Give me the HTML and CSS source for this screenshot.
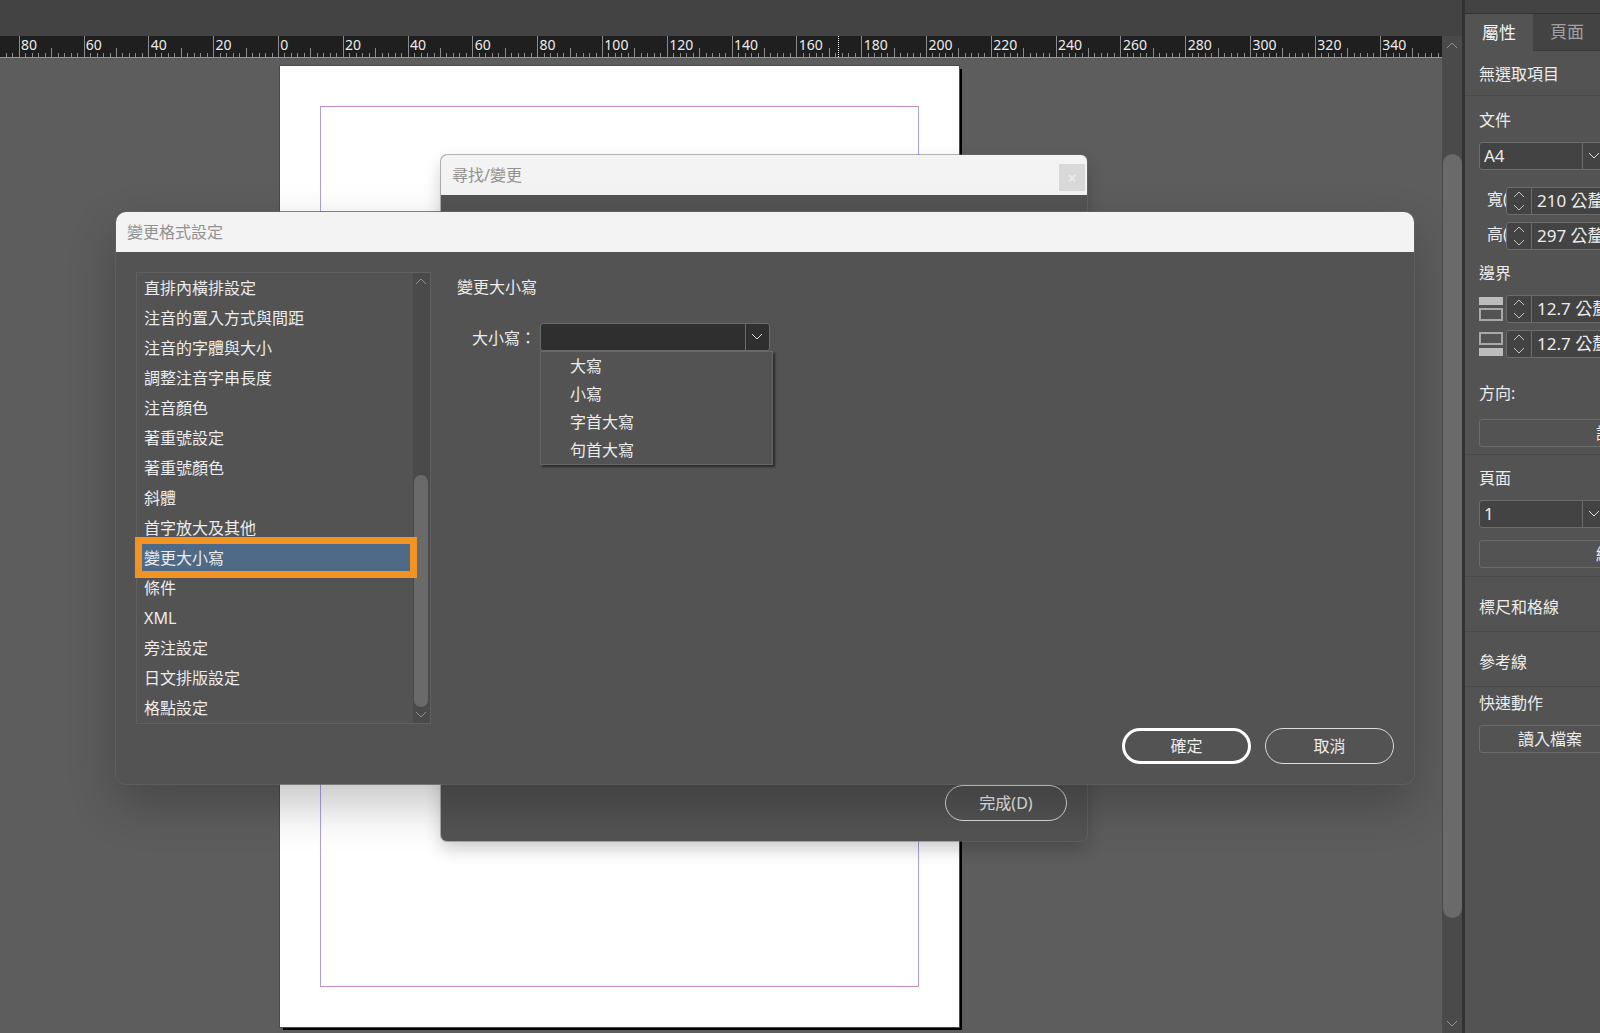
FILE: index.html
```
<!DOCTYPE html>
<html lang="zh-Hant">
  <head>
    <meta charset="utf-8">
    <title>變更格式設定</title>
    <link rel="stylesheet" href="styles.css">
  </head>
  <body>
    <main class="workspace">
      <div class="topbar"></div>
      <div class="work-row">
        <div class="work-main">
          <div class="ruler">
            <svg class="ruler-ticks" width="1442" height="21">
              <path id="ticks" />
              <path class="cursor-mark" d="M838.5 0V21" />
            </svg>
            <div class="ruler-labels" id="rulerLabels"></div>
          </div>
          <div class="canvas">
            <div class="page"><div class="page-margin"></div></div>

            <section class="window find-window">
              <header class="window-title find-title">
                <span>尋找/變更</span>
                <button class="close" aria-label="關閉">×</button>
              </header>
              <div class="find-body">
                <button class="pill done">完成(D)</button>
              </div>
            </section>

            <section class="window format-window">
              <header class="window-title">變更格式設定</header>
              <div class="format-body">
                <div class="category-box">
                  <ul class="categories">
                    <li><button>直排內橫排設定</button></li>
                    <li><button>注音的置入方式與間距</button></li>
                    <li><button>注音的字體與大小</button></li>
                    <li><button>調整注音字串長度</button></li>
                    <li><button>注音顏色</button></li>
                    <li><button>著重號設定</button></li>
                    <li><button>著重號顏色</button></li>
                    <li><button>斜體</button></li>
                    <li><button>首字放大及其他</button></li>
                    <li class="selected"><button>變更大小寫</button></li>
                    <li><button>條件</button></li>
                    <li><button>XML</button></li>
                    <li><button>旁注設定</button></li>
                    <li><button>日文排版設定</button></li>
                    <li><button>格點設定</button></li>
                  </ul>
                  <div class="scrollbar list-scroll">
                    <button class="scroll-arrow" aria-label="向上"><svg width="12" height="8"><path d="M1 7l5-5 5 5" /></svg></button>
                    <div class="gap-before"></div>
                    <div class="thumb"></div>
                    <button class="scroll-arrow" aria-label="向下"><svg width="12" height="8"><path d="M1 1l5 5 5-5" /></svg></button>
                  </div>
                </div>

                <div class="settings">
                  <h2>變更大小寫</h2>
                  <div class="case-row">
                    <label for="case">大小寫：</label>
                    <div class="case-field">
                      <select id="case" class="combo case-select"><option></option></select>
                      <div class="menu">
                        <button>大寫</button>
                        <button>小寫</button>
                        <button>字首大寫</button>
                        <button>句首大寫</button>
                      </div>
                    </div>
                  </div>
                  <div class="actions">
                    <button class="pill primary">確定</button>
                    <button class="pill">取消</button>
                  </div>
                </div>
              </div>
            </section>
          </div>
        </div>
        <div class="scrollbar canvas-scroll">
          <button class="scroll-arrow" aria-label="向上"><svg width="12" height="8"><path d="M1 7l5-5 5 5" /></svg></button>
          <div class="gap-before"></div>
          <div class="thumb"></div>
          <div class="gap-after"></div>
          <button class="scroll-arrow" aria-label="向下"><svg width="12" height="8"><path d="M1 1l5 5 5-5" /></svg></button>
        </div>
      </div>
    </main>

    <aside class="panel">
      <div class="tabs">
        <button class="tab active">屬性</button>
        <button class="tab">頁面</button>
      </div>
      <div class="panel-body">
        <section class="group status">無選取項目</section>

        <section class="group document">
          <h3><label for="preset">文件</label></h3>
          <select id="preset" class="combo"><option>A4</option></select>
          <div class="fields size-fields">
            <div class="field">
              <label for="width">寬(W):</label>
              <div class="stepper">
                <button aria-label="調整寬度"><svg width="14" height="20"><path d="M2 6l5-5 5 5M2 14l5 5 5-5" /></svg></button>
                <input id="width" value="210 公釐">
              </div>
            </div>
            <div class="field">
              <label for="height">高(H):</label>
              <div class="stepper">
                <button aria-label="調整高度"><svg width="14" height="20"><path d="M2 6l5-5 5 5M2 14l5 5 5-5" /></svg></button>
                <input id="height" value="297 公釐">
              </div>
            </div>
          </div>
          <h3 class="margin-heading">邊界</h3>
          <div class="fields">
            <div class="field icon-field">
              <label for="marginTop" aria-label="上邊界">
                <svg class="margin-icon" width="24" height="24"><path class="fill" d="M1 1h22v6H1z" /><path d="M1 12h22v11H1z" /></svg>
              </label>
              <div class="stepper">
                <button aria-label="調整上邊界"><svg width="14" height="20"><path d="M2 6l5-5 5 5M2 14l5 5 5-5" /></svg></button>
                <input id="marginTop" value="12.7 公釐">
              </div>
            </div>
            <div class="field icon-field">
              <label for="marginBottom" aria-label="下邊界">
                <svg class="margin-icon" width="24" height="24"><path d="M1 1h22v11H1z" /><path class="fill" d="M1 17h22v6H1z" /></svg>
              </label>
              <div class="stepper">
                <button aria-label="調整下邊界"><svg width="14" height="20"><path d="M2 6l5-5 5 5M2 14l5 5 5-5" /></svg></button>
                <input id="marginBottom" value="12.7 公釐">
              </div>
            </div>
          </div>
          <h3 class="direction-heading">方向:</h3>
          <button class="wide-button">調整版面</button>
        </section>

        <section class="group pages">
          <h3><label for="pageNumber">頁面</label></h3>
          <select id="pageNumber" class="combo"><option>1</option></select>
          <button class="wide-button">編輯頁面</button>
        </section>

        <section class="group single">標尺和格線</section>
        <section class="group single">參考線</section>

        <section class="group quick">
          <h3>快速動作</h3>
          <button class="wide-button half">讀入檔案</button>
        </section>
      </div>
    </aside>

    <script>
      // ruler: 20 units per label, a short tick every 2 units
      const ORIGIN = 278;
      const STEP = 64.8;
      const labels = document.getElementById("rulerLabels");
      let path = "";

      for (let i = -50; i < 180; i++) {
        const x = Math.round(ORIGIN + (i * STEP) / 10) + 0.5;
        let top = 17;
        if (i % 10 === 0) top = 0;
        else if (i % 5 === 0) top = 12;
        path += `M${x} ${top}V21`;
      }
      document.getElementById("ticks").setAttribute("d", path);

      for (let i = -4; i < 18; i++) {
        const label = document.createElement("span");
        label.textContent = Math.abs(i * 20);
        labels.appendChild(label);
      }
    </script>
  </body>
</html>
```

FILE: styles.css
```
* {
  box-sizing: border-box;
}
body {
  display: flex;
  height: 100vh;
  margin: 0;
  overflow: hidden;
  background: #535353;
  color: #ececec;
  font-family: "Noto Sans", "Noto Sans CJK TC", sans-serif;
  font-size: 16px;
  line-height: 24px;
}
button,
input,
select {
  margin: 0;
  padding: 0;
  border: none;
  background: none;
  color: inherit;
  font: inherit;
}
h2,
h3 {
  margin: 0;
  font-size: 16px;
  font-weight: normal;
}
svg {
  display: block;
  fill: none;
  stroke: #c4c4c4;
}

/* workspace */
.workspace {
  display: flex;
  flex: 1;
  flex-direction: column;
  min-width: 0;
}
.topbar {
  height: 36px;
  background: #434343;
}
.work-row {
  display: flex;
  flex: 1;
  min-height: 0;
}
.work-main {
  display: flex;
  flex: 1;
  flex-direction: column;
  min-width: 0;
}
.ruler {
  display: grid;
  height: 22px;
  overflow: hidden;
  border-bottom: 1px solid #969696;
  background: #1f1f1f;
}
.ruler-ticks,
.ruler-labels {
  grid-area: 1 / 1;
}
.ruler-ticks {
  stroke: #8c8c8c;
}
.cursor-mark {
  stroke: #fff;
  stroke-dasharray: 1 1;
}
.ruler-labels {
  display: grid;
  grid-template-columns: repeat(22, 1fr);
  width: 1426px;
  margin-left: 21px;
  font-size: 14px;
  line-height: 17px;
}
.canvas {
  position: relative;
  flex: 1;
  overflow: hidden;
  background: #5d5d5d;
}
.page {
  position: absolute;
  top: 8px;
  left: 280px;
  width: 679px;
  height: 961px;
  padding: 40px;
  outline: 1px solid #4a4a4a;
  background: #fff;
  box-shadow: 3px 3px 0 #000;
}
.page-margin {
  height: 100%;
  border: 1px solid #a9a2ea;
  border-top-color: #c98cb8;
  border-bottom-color: #c98cb8;
}

/* scrollbars */
.scrollbar {
  display: flex;
  flex-direction: column;
  background: #4a4a4a;
}
.scroll-arrow {
  display: flex;
  align-items: center;
  justify-content: center;
  height: 18px;
}
.scroll-arrow svg {
  stroke: #919191;
}
.thumb {
  border-radius: 10px;
  background: #6a6a6a;
}
.canvas-scroll {
  width: 20px;
}
.canvas-scroll .gap-before {
  flex: 100;
}
.canvas-scroll .thumb {
  flex: 764;
  margin-left: 1px;
}
.canvas-scroll .gap-after {
  flex: 97;
}

/* windows */
.window {
  position: absolute;
  display: flex;
  flex-direction: column;
  background: #535353;
}
.window-title {
  display: flex;
  align-items: center;
  height: 40px;
  padding-left: 11px;
  background: #f3f3f3;
  color: #929292;
}
.find-window {
  top: 97px;
  left: 441px;
  width: 646px;
  height: 686px;
  overflow: hidden;
  border-radius: 6px;
  box-shadow: 0 0 0 1px rgba(110, 110, 110, 0.5), 0 8px 18px rgba(0, 0, 0, 0.2);
}
.find-title {
  justify-content: space-between;
  padding-right: 2px;
}
.close {
  width: 26px;
  height: 27px;
  margin-top: 5px;
  background: #d9d9d9;
  color: #f0f0f0;
}
.find-body {
  display: flex;
  flex: 1;
  align-items: flex-end;
  justify-content: flex-end;
  padding: 20px;
}
.format-window {
  top: 154px;
  right: 28px;
  left: 116px;
  height: 572px;
  overflow: hidden;
  border-radius: 10px;
  box-shadow: 0 0 0 1px rgba(96, 96, 96, 0.8), 0 20px 48px rgba(0, 0, 0, 0.24);
}
.format-body {
  display: flex;
  flex: 1;
  gap: 26px;
  padding: 20px;
}
.category-box {
  display: flex;
  width: 295px;
  height: 452px;
  border: 1px solid #606060;
}
.categories {
  flex: 1;
  margin: 0;
  padding: 0;
  list-style: none;
}
.categories li {
  position: relative;
  height: 30px;
}
.categories button {
  width: 100%;
  height: 30px;
  padding: 0 0 0 7px;
  text-align: left;
}
.categories .selected button {
  background: #4e6a87;
}
/* highlight frame laid over the rows around the selected one */
.categories .selected::after {
  position: absolute;
  inset: -6px -4px -5px -2px;
  border: 7px solid #f29423;
  content: "";
}
.list-scroll {
  width: 17px;
  padding: 0 2px 0 1px;
}
.list-scroll .scroll-arrow {
  height: 16px;
}
.list-scroll .gap-before {
  flex: 185;
}
.list-scroll .thumb {
  flex: 231;
}
.settings {
  display: flex;
  flex: 1;
  flex-direction: column;
}
.settings h2 {
  padding-top: 3px;
}
.case-row {
  display: flex;
  gap: 4px;
  margin-top: 24px;
  padding-left: 15px;
}
.case-row label {
  width: 64px;
  line-height: 30px;
}
.case-field {
  position: relative;
  width: 230px;
}
.menu {
  position: absolute;
  top: 28px;
  left: 0;
  display: flex;
  flex-direction: column;
  width: 233px;
  border: 1px solid #686868;
  background: #535353;
  box-shadow: 2px 2px 2px #2a2a2a;
}
.menu button {
  height: 28px;
  padding-left: 29px;
  text-align: left;
}
.actions {
  display: flex;
  gap: 14px;
  justify-content: flex-end;
  margin-top: auto;
}
.pill {
  width: 129px;
  height: 36px;
  border: 1px solid #dcdcdc;
  border-radius: 18px;
}
.primary {
  border: 3px solid #fff;
}
.done {
  width: 122px;
}

/* form controls */
.combo {
  display: block;
  width: 128px;
  height: 28px;
  padding-left: 4px;
  border: 1px solid #6c6c6c;
  border-radius: 3px;
  appearance: none;
  background:
    url("data:image/svg+xml,%3Csvg xmlns='http://www.w3.org/2000/svg' width='12' height='8'%3E%3Cpath d='M1 1l5 5 5-5' fill='none' stroke='%23dddddd'/%3E%3C/svg%3E") right 6px center no-repeat,
    linear-gradient(#6c6c6c, #6c6c6c) right 23px center / 1px 100% no-repeat,
    #434343;
  font-size: 17px;
}
.case-select {
  width: 100%;
  background-color: #2f2f2f;
}
.wide-button {
  display: block;
  width: 100%;
  height: 28px;
  border: 1px solid #6c6c6c;
  border-radius: 3px;
}
.half {
  width: 142px;
}
.fields {
  display: flex;
  flex-direction: column;
  gap: 7px;
}
.field {
  display: flex;
}
.field label {
  width: 19px;
  margin-left: 8px;
  overflow: hidden;
  white-space: nowrap;
}
.icon-field label {
  width: 24px;
  margin: 2px 3px 0 0;
}
.margin-icon {
  stroke: #a8a8a8;
  stroke-width: 2;
}
.margin-icon .fill {
  fill: #bcbcbc;
  stroke: #bcbcbc;
}
.stepper {
  display: flex;
  width: 130px;
  height: 28px;
  border: 1px solid #6c6c6c;
  border-radius: 3px;
  background: #434343;
}
.stepper button {
  display: flex;
  align-items: center;
  justify-content: center;
  width: 25px;
  border-right: 1px solid #6c6c6c;
}
.stepper input {
  flex: 1;
  min-width: 0;
  padding-left: 5px;
  font-size: 17px;
}

/* properties panel */
.panel {
  display: flex;
  flex-direction: column;
  width: 138px;
  overflow: hidden;
  border-left: 3px solid #323232;
}
.tabs {
  display: flex;
  height: 51px;
  padding-top: 13px;
  background: #434343;
}
.tab {
  flex: none;
  width: 68px;
  border-top: 1px solid #323232;
  border-bottom: 1px solid #3a3a3a;
  color: #a0a0a0;
  font-size: 17px;
}
.tab.active {
  border-bottom: none;
  background: #535353;
  color: #f2f2f2;
}
/* the panel content is wider than the visible strip */
.panel-body {
  width: 326px;
}
.group {
  padding: 0 14px;
  border-bottom: 1px solid #4a4a4a;
}
.status {
  padding-top: 11px;
  padding-bottom: 9px;
}
.document {
  padding-top: 12px;
  padding-bottom: 7px;
}
.document h3,
.pages h3,
.quick h3 {
  margin-bottom: 10px;
}
.size-fields {
  margin-top: 17px;
}
.document .margin-heading {
  margin: 11px 0 10px;
}
.document .direction-heading {
  margin: 23px 0 14px;
}
.pages {
  padding-top: 11px;
  padding-bottom: 8px;
}
.pages .combo {
  margin-bottom: 12px;
}
.single {
  padding-top: 18px;
  padding-bottom: 12px;
}
.quick {
  padding-top: 4px;
  border-bottom: none;
}
```
